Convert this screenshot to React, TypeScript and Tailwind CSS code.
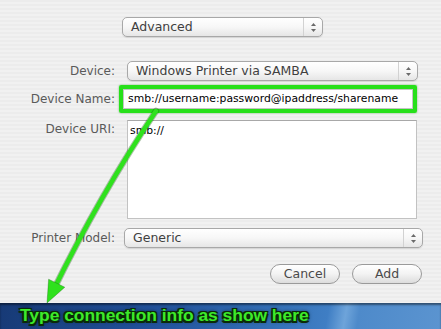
import React from "react";

const font = { fontFamily: '"DejaVu Sans", "Liberation Sans", sans-serif' };

const Stepper = () => (
  <svg width="7" height="11" viewBox="0 0 7 11">
    <path d="M3.5 1 L6 4 L1 4 Z" fill="#6a6a6a" />
    <path d="M3.5 10 L6 7 L1 7 Z" fill="#6a6a6a" />
  </svg>
);

const Popup = ({ text, className }: { text: string; className: string }) => {
  return (
    <div
      className={`flex h-[20px] items-stretch rounded-[5px] border border-[#a8a8a8] bg-linear-to-b from-white via-[#f7f7f7] to-[#e6e6e6] shadow-[0_1px_1px_rgba(0,0,0,0.1)] ${className}`}
    >
      <div className="flex flex-1 items-center pl-[8px] text-[12.5px] leading-none text-[#404040]">
        {text}
      </div>
      <div className="flex w-[19px] items-center justify-center border-l border-[#d2d2d2]">
        <Stepper />
      </div>
    </div>
  );
};

const Label = ({ children }: { children: React.ReactNode }) => (
  <div className="w-[115px] shrink-0 text-right text-[12px] leading-none text-[#5a5a5a]">
    {children}
  </div>
);

const Button = ({ text, className }: { text: string; className: string }) => (
  <div
    className={`flex h-[20px] w-[70px] items-center justify-center rounded-full border border-[#9a9a9a] bg-linear-to-b from-white via-[#f3f3f3] to-[#dcdcdc] text-[12.5px] leading-none text-[#4a4a4a] ${className}`}
  >
    {text}
  </div>
);

export default function App() {
  return (
    <div className="relative flex h-[329px] w-[441px] flex-col overflow-hidden" style={font}>
      {/* sheet */}
      <div className="flex h-[303px] flex-col bg-[repeating-linear-gradient(to_bottom,#ececec_0px,#ececec_2px,#f1f1f1_2px,#f1f1f1_4px)] pt-[17px]">
        <Popup text="Advanced" className="ml-[122px] w-[201px]" />

        <div className="mt-[24px] flex items-center">
          <Label>Device:</Label>
          <Popup text="Windows Printer via SAMBA" className="ml-[12px] w-[291px]" />
        </div>

        <div className="mt-[4px] flex items-center">
          <Label>Device Name:</Label>
          <div className="ml-[4px] flex h-[28px] w-[298px] items-stretch rounded-[2px] border-4 border-[#27e01a] shadow-[0_0_2px_rgba(20,140,10,0.6)]">
            <div className="flex flex-1 items-center border border-[#c4c4c4] bg-white pl-[4px] text-[10.8px] leading-none text-black">
              smb://username:password@ipaddress/sharename
            </div>
          </div>
        </div>

        <div className="mt-[7px] flex items-start">
          <div className="pt-[3px]">
            <Label>Device URI:</Label>
          </div>
          <div className="ml-[12px] h-[99px] w-[290px] border border-[#c2c2c2] border-t-[#a8a8a8] bg-white pl-[2px] pt-[5px] text-[10.8px] leading-none text-black">
            smb://
          </div>
        </div>

        <div className="mt-[9px] flex items-center">
          <Label>Printer Model:</Label>
          <Popup text="Generic" className="ml-[9px] w-[299px]" />
        </div>

        <div className="mt-[16px] flex justify-end pr-[19px]">
          <Button text="Cancel" className="" />
          <Button text="Add" className="ml-[12px]" />
        </div>
      </div>

      {/* desktop strip */}
      <div className="flex h-[26px] items-center bg-[linear-gradient(100deg,#173a76_0%,#21519a_35%,#3470b6_62%,#3f7ec4_74%,#6ea4da_78%,#4e8aca_81%,#5b94d0_100%)] pl-[20px] shadow-[inset_0_2px_2px_rgba(0,0,0,0.45)]">
        <span
          className="text-[17.4px] font-bold leading-none text-[#3dea2a] [text-shadow:1.5px_1.5px_0_#0b2a08,-1.5px_-1.5px_0_#0b2a08,1.5px_-1.5px_0_#0b2a08,-1.5px_1.5px_0_#0b2a08,0_1.5px_0_#0b2a08,0_-1.5px_0_#0b2a08,0_0_4px_#000]"
          style={{ fontFamily: '"Liberation Sans", Arial, sans-serif' }}
        >
          Type connection info as show here
        </span>
      </div>

      {/* annotation arrow */}
      <svg
        className="pointer-events-none absolute left-0 top-0"
        width="441"
        height="329"
        viewBox="0 0 441 329"
      >
        <path
          d="M156 111 Q100 195 53 291"
          fill="none"
          stroke="rgba(20,90,10,0.35)"
          strokeWidth="6.5"
          strokeLinecap="round"
        />
        <path
          d="M156 111 Q100 195 53 291"
          fill="none"
          stroke="#2fe11d"
          strokeWidth="4.5"
          strokeLinecap="round"
        />
        <polygon points="47,303 64.8,287.2 48.6,279.2" fill="#2fe11d" stroke="rgba(20,90,10,0.4)" strokeWidth="0.8" />
      </svg>
    </div>
  );
}
